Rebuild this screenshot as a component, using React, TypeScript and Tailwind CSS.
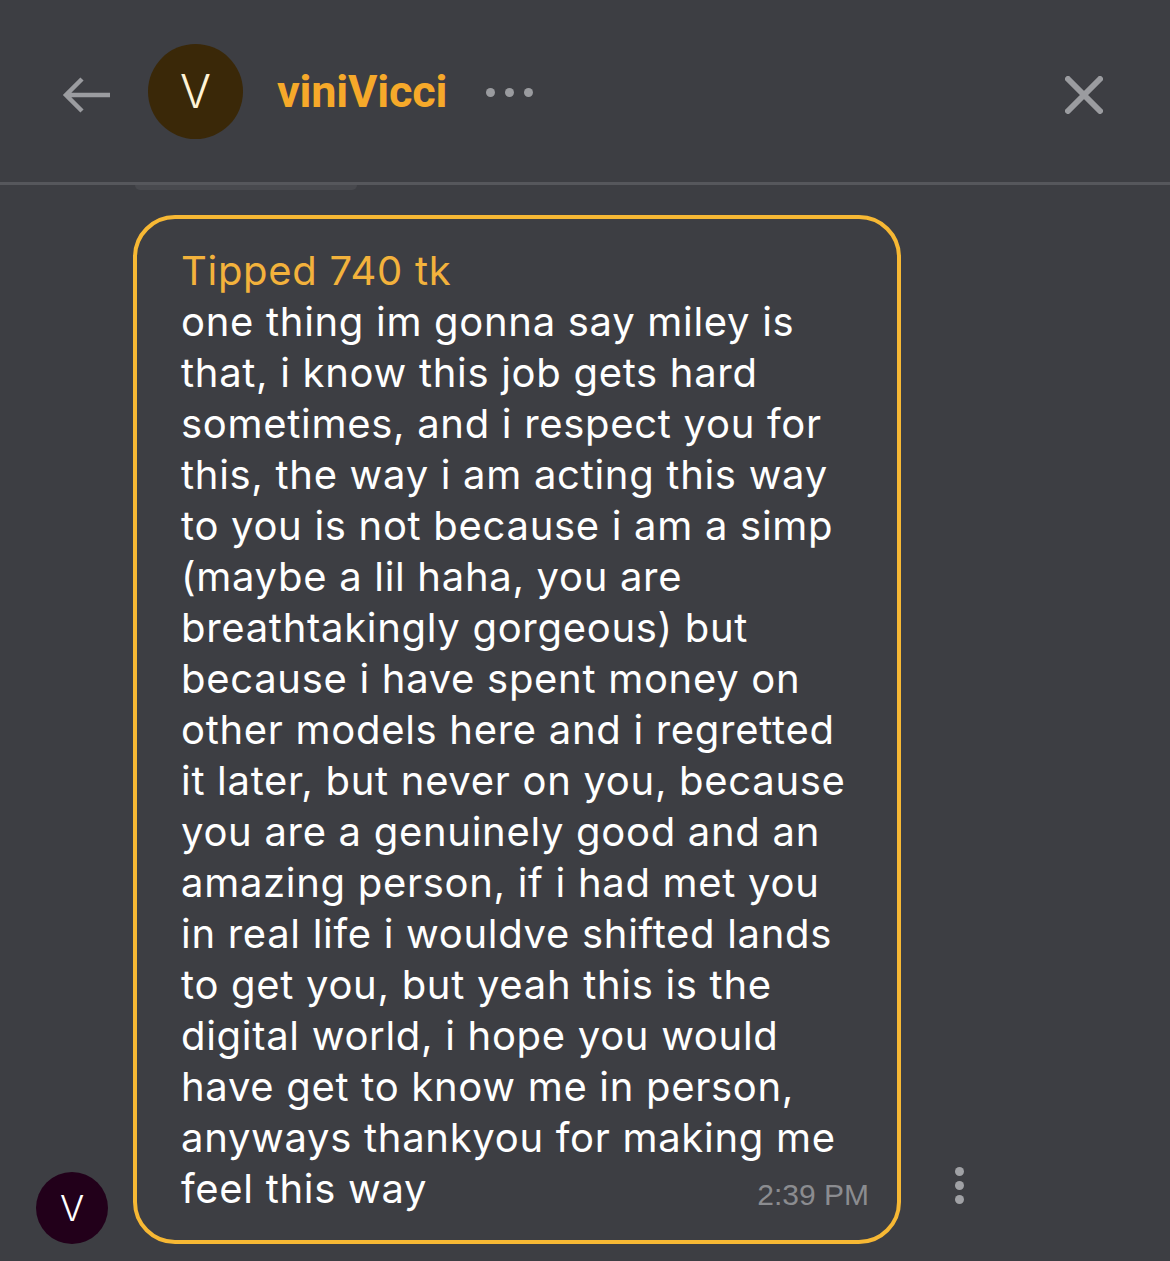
const lines = [
  "one thing im gonna say miley is",
  "that, i know this job gets hard",
  "sometimes, and i respect you for",
  "this, the way i am acting this way",
  "to you is not because i am a simp",
  "(maybe a lil haha, you are",
  "breathtakingly gorgeous) but",
  "because i have spent money on",
  "other models here and i regretted",
  "it later, but never on you, because",
  "you are a genuinely good and an",
  "amazing person, if i had met you",
  "in real life i wouldve shifted lands",
  "to get you, but yeah this is the",
  "digital world, i hope you would",
  "have get to know me in person,",
  "anyways thankyou for making me",
];

function Header() {
  return (
    <div className="flex flex-col">
      <div className="h-[182px] flex items-center pl-[60px] pr-[67px]">
        {/* back */}
        <svg width="52" height="42" viewBox="0 0 52 42" className="mt-[8px]">
          <path d="M50 21H6M22 5L6 21L22 37" fill="none" stroke="#9b9ca0" strokeWidth="4.5" />
        </svg>
        <div className="ml-[36px] w-[95px] h-[95px] rounded-full bg-[#3a2808] flex items-center justify-center">
          <span className="text-[#fff3d6] text-[46px] font-light leading-none" style={{ fontFamily: "Inter, sans-serif" }}>V</span>
        </div>
        <span className="ml-[34px] text-[#f6a92a] text-[45px] font-bold leading-none tracking-[-0.2px]" style={{ fontFamily: "Roboto, 'Liberation Sans', sans-serif" }}>
          viniVicci
        </span>
        <div className="ml-[39px] flex gap-[10px] items-center mt-[2px]">
          <span className="w-[9px] h-[9px] rounded-full bg-[#9a9b9f]" />
          <span className="w-[9px] h-[9px] rounded-full bg-[#9a9b9f]" />
          <span className="w-[9px] h-[9px] rounded-full bg-[#9a9b9f]" />
        </div>
        <div className="flex-1" />
        <svg width="38" height="38" viewBox="0 0 38 38" className="mt-[8px]">
          <path d="M3 3L35 35M35 3L3 35" fill="none" stroke="#9b9ca0" strokeWidth="6" strokeLinecap="round" />
        </svg>
      </div>
      <div className="h-[3px] bg-[#56575c]" />
      <div className="ml-[135px] w-[222px] h-[5px] rounded-b-[10px] bg-[#48494e]" />
    </div>
  );
}

export default function App() {
  return (
    <div className="w-[1170px] h-[1261px] bg-[#3d3e43] overflow-hidden" style={{ fontFamily: "Inter, 'Liberation Sans', sans-serif" }}>
      <Header />
      <div className="flex items-end mt-[25px]">
        <div className="ml-[36px] w-[72px] h-[72px] rounded-full bg-[#22001a] flex items-center justify-center">
          <span className="text-white text-[36px] font-light leading-none">V</span>
        </div>
        <div className="ml-[25px] w-[768px] border-[4px] border-[#f7b834] rounded-[42px] pl-[44px] pr-[28px] pt-[26px] pb-[22px] text-[40px] leading-[51px] tracking-[0.7px]">
          <div className="text-[#f3b23c] whitespace-nowrap">Tipped 740 tk</div>
          {lines.map((l, i) => (
            <div key={i} className="text-white whitespace-nowrap">{l}</div>
          ))}
          <div className="flex items-baseline justify-between">
            <span className="text-white whitespace-nowrap">feel this way</span>
            <span className="text-[#8b8c90] text-[30px] tracking-normal relative top-[2px]" style={{ fontFamily: "'Liberation Sans', sans-serif" }}>2:39 PM</span>
          </div>
        </div>
        <div className="ml-[54px] mb-[40px] flex flex-col gap-[5px]">
          <span className="w-[9px] h-[9px] rounded-full bg-[#a0a1a5]" />
          <span className="w-[9px] h-[9px] rounded-full bg-[#a0a1a5]" />
          <span className="w-[9px] h-[9px] rounded-full bg-[#a0a1a5]" />
        </div>
      </div>
    </div>
  );
}
